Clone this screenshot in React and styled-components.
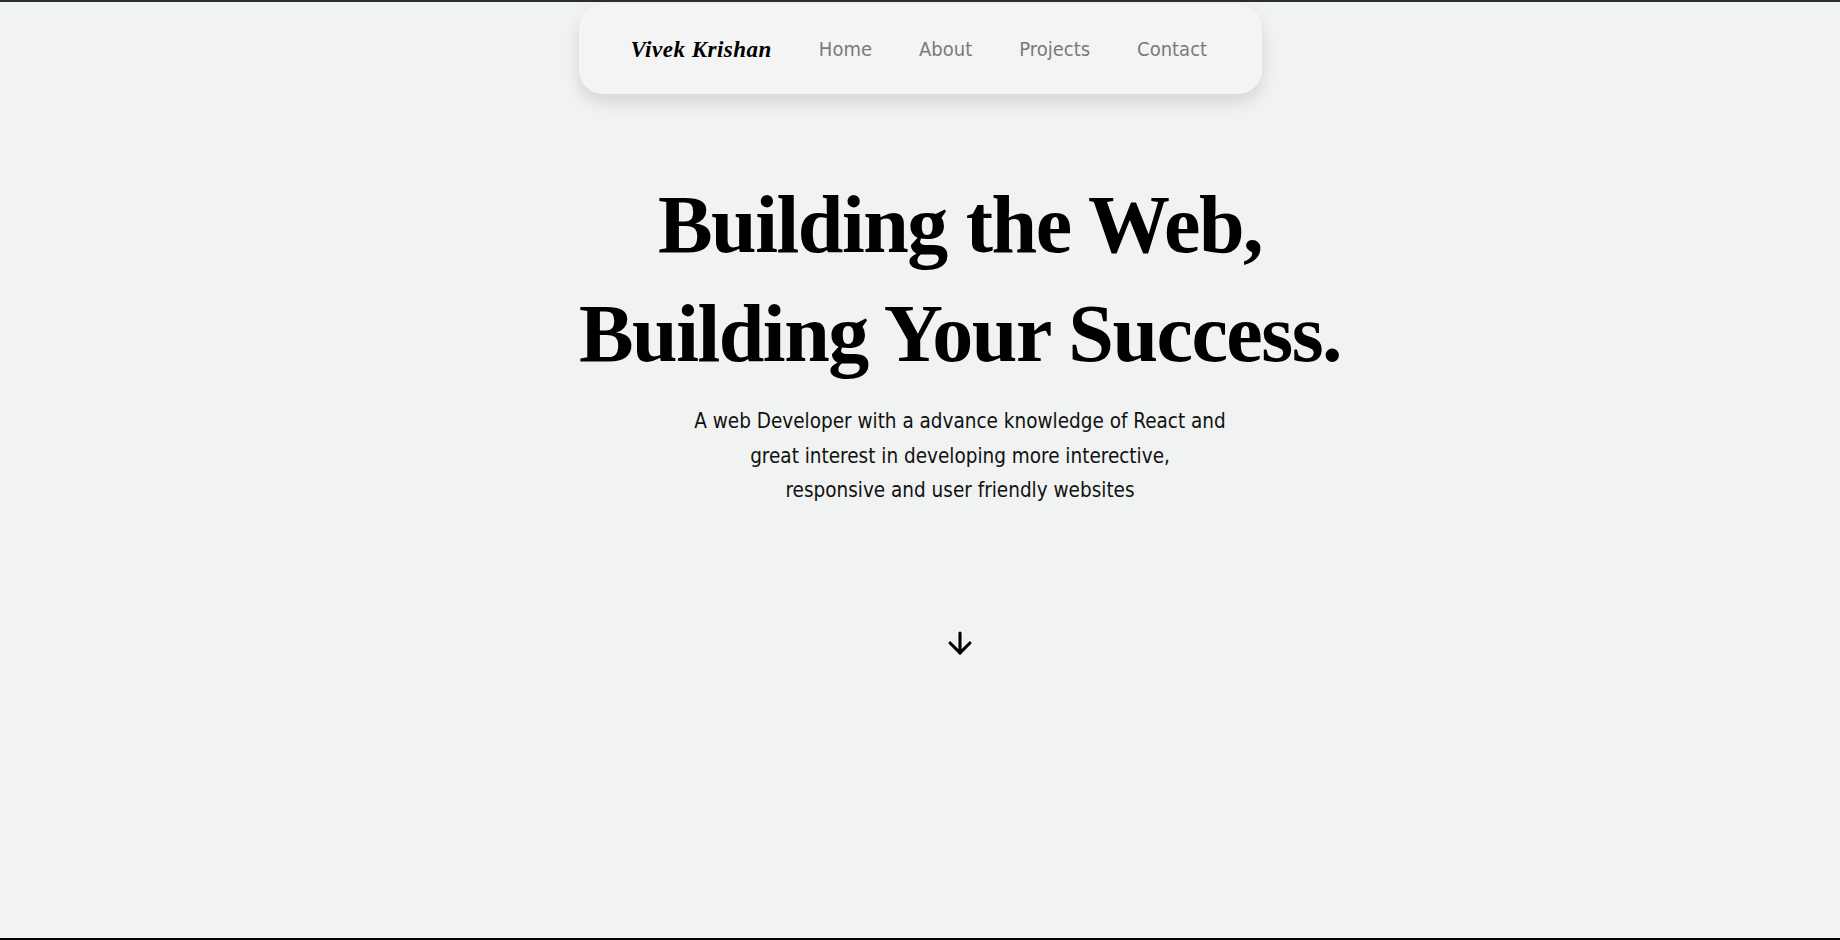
import React from 'react';
import styled, { createGlobalStyle } from 'styled-components';
import { ArrowDown } from 'lucide-react';

const GlobalStyle = createGlobalStyle`
  * { box-sizing: border-box; }
  html, body {
    margin: 0;
    padding: 0;
    background-color: #f1f3f2;
  }
`;

function App() {
  return (
    <>
      <GlobalStyle />
      <PageStyled>
        <NavBar>
          <Logo>Vivek Krishan</Logo>
          <NavLink>Home</NavLink>
          <NavLink>About</NavLink>
          <NavLink>Projects</NavLink>
          <NavLink>Contact</NavLink>
        </NavBar>
        <Hero>
          <Title>
            Building the Web,
            <br />
            Building Your Success.
          </Title>
          <Intro>
            A web Developer with a advance knowledge of React and
            <br />
            great interest in developing more interective,
            <br />
            responsive and user friendly websites
          </Intro>
          <ScrollDown>
            <ArrowDown size={34} strokeWidth={2.2} color="#000" />
          </ScrollDown>
        </Hero>
      </PageStyled>
    </>
  );
}

export default App;

const PageStyled = styled.div`
  min-height: 100vh;
  border-top: 2px solid #2a2e39;
  border-bottom: 2px solid #000;
  display: flex;
  flex-direction: column;
`;

const NavBar = styled.nav`
  width: 683px;
  height: 90px;
  margin: 2px auto 0;
  padding: 0 52px;
  display: flex;
  align-items: center;
  gap: 47px;
  background-color: #f4f4f4;
  border-radius: 24px;
  box-shadow: 0 8px 16px rgba(0, 0, 0, 0.12);
`;

const Logo = styled.div`
  font-family: "Liberation Serif", serif;
  font-style: italic;
  font-weight: 700;
  font-size: 23px;
  color: #000;
  letter-spacing: 0.5px;
  white-space: nowrap;
  margin-top: 2px;
`;

const NavLink = styled.a`
  font-family: "DejaVu Sans Condensed", "DejaVu Sans", sans-serif;
  font-stretch: condensed;
  font-weight: 400;
  font-size: 20px;
  color: #7a7a7a;
  white-space: nowrap;
  cursor: pointer;
  &:hover {
    color: #000;
  }
`;

const Hero = styled.section`
  padding-left: 80px;
  display: flex;
  flex-direction: column;
  align-items: center;
  text-align: center;
`;

const Title = styled.h1`
  margin: 76px 0 0;
  font-family: "Liberation Serif", serif;
  font-weight: 700;
  font-size: 82px;
  line-height: 109px;
  letter-spacing: -1.5px;
  color: #000;
`;

const Intro = styled.p`
  margin: 16px 0 0;
  font-family: "DejaVu Sans Condensed", "DejaVu Sans", sans-serif;
  font-stretch: condensed;
  font-size: 20.5px;
  line-height: 34.5px;
  color: #111;
`;

const ScrollDown = styled.div`
  margin-top: 118px;
  display: flex;
  justify-content: center;
`;
